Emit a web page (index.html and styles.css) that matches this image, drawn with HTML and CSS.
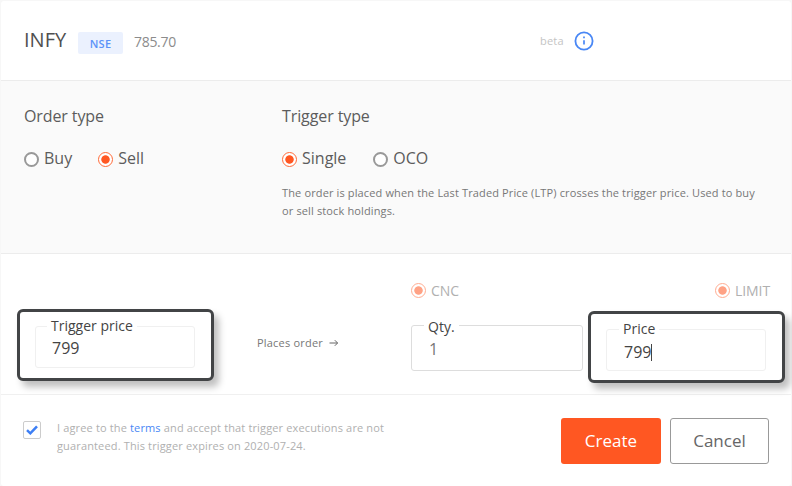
FILE: index.html
```html
<!DOCTYPE html>
<html lang="en">
<head>
  <meta charset="UTF-8" />
  <meta name="viewport" content="width=device-width, initial-scale=1" />
  <title>Create GTT</title>
  <link rel="stylesheet" href="styles.css">
</head>
<body>
<form class="gtt">
  <header class="gtt-header">
    <span class="symbol">INFY</span>
    <span class="exchange">NSE</span>
    <span class="last-price">785.70</span>
    <span class="beta">beta</span>
    <svg class="info" viewBox="0 0 20 20">
      <circle cx="10" cy="10" r="8.6" fill="none" stroke="#4987f5" stroke-width="1.8"/>
      <path d="M10 9.2v4.4M10 5.6v1.6" stroke="#4987f5" stroke-width="1.7"/>
    </svg>
  </header>

  <section class="types">
    <div class="order-type">
      <h2>Order type</h2>
      <div class="radios">
        <label class="radio"><i class="dot"></i><span>Buy</span></label>
        <label class="radio"><i class="dot checked"></i><span>Sell</span></label>
      </div>
    </div>
    <div class="trigger-type">
      <h2>Trigger type</h2>
      <div class="radios">
        <label class="radio"><i class="dot checked"></i><span>Single</span></label>
        <label class="radio"><i class="dot"></i><span>OCO</span></label>
      </div>
      <p class="hint">The order is placed when the Last Traded Price (LTP) crosses the trigger price. Used to buy<br>or sell stock holdings.</p>
    </div>
  </section>

  <section class="order">
    <div class="order-options">
      <label class="radio faded"><i class="dot checked"></i><span>CNC</span></label>
      <label class="radio faded"><i class="dot checked"></i><span>LIMIT</span></label>
    </div>
    <div class="order-fields">
      <div class="highlight trigger">
        <fieldset class="field">
          <legend>Trigger price</legend>
          <div class="value">799</div>
        </fieldset>
      </div>
      <div class="places">
        <span>Places order</span>
        <svg class="arrow" viewBox="0 0 10 8"><path d="M0.5 4h8M5.8 1.2L8.6 4L5.8 6.8" fill="none" stroke="#666" stroke-width="1"/></svg>
      </div>
      <fieldset class="field qty">
        <legend>Qty.</legend>
        <div class="value">1</div>
      </fieldset>
      <div class="highlight price">
        <fieldset class="field">
          <legend>Price</legend>
          <div class="value">799<span class="caret"></span></div>
        </fieldset>
      </div>
    </div>
  </section>

  <footer class="gtt-footer">
    <div class="checkbox">
      <svg viewBox="0 0 12 10"><path d="M1 5.2L4.3 8.3L11 1.3" fill="none" stroke="#3d7ff5" stroke-width="2.5"/></svg>
    </div>
    <p class="agree">I agree to the <a>terms</a> and accept that trigger executions are not<br>guaranteed. This trigger expires on 2020-07-24.</p>
    <button type="button" class="btn create">Create</button>
    <button type="button" class="btn cancel">Cancel</button>
  </footer>
</form>
</body>
</html>
```
FILE: styles.css
```css
* {
  box-sizing: border-box;
}
body {
  margin: 0;
  background: #f7f7f7;
  font-family: "Open Sans", "Noto Sans", sans-serif;
  font-size: 16px;
  color: #5c5c5c;
}
.gtt {
  width: 790px;
  height: 485px;
  margin: 1px 0 0 1px;
  background: #fff;
  border-radius: 3px;
}
.gtt-header {
  display: flex;
  height: 80px;
  padding-left: 23px;
  border-bottom: 1px solid #ececec;
}
.symbol {
  width: 54px;
  margin-top: 25px;
  font-size: 20px;
  line-height: 28px;
  color: #505050;
}
.exchange {
  width: 45px;
  height: 22px;
  margin-top: 31px;
  border-radius: 2px;
  background: #ebf1fe;
  color: #5b93f8;
  font-size: 11px;
  font-weight: 600;
  line-height: 23px;
  letter-spacing: 0.3px;
  text-align: center;
}
.last-price {
  width: 70px;
  margin: 30px 0 0 11px;
  font-size: 14px;
  line-height: 21px;
  letter-spacing: -0.3px;
  color: #8c8c8c;
}
.beta {
  width: 34px;
  margin: 30px 0 0 336px;
  font-size: 11px;
  line-height: 19px;
  letter-spacing: 0.2px;
  color: #c4c4c4;
}
.info {
  width: 20px;
  height: 20px;
  margin-top: 30px;
}
.types {
  display: flex;
  height: 173px;
  padding: 24px 23px 0;
  background: #fafafa;
  border-bottom: 1px solid #ececec;
}
.order-type {
  width: 258px;
}
.trigger-type {
  white-space: nowrap;
}
h2 {
  margin: 0;
  font-size: 16px;
  line-height: 22px;
  font-weight: 400;
  letter-spacing: -0.1px;
}
.radios {
  display: flex;
  gap: 26px;
  margin-top: 20px;
}
.trigger-type .radios {
  gap: 27px;
}
.radio {
  display: flex;
  gap: 5px;
  line-height: 22px;
}
.dot {
  width: 15px;
  height: 15px;
  margin-top: 5px;
  border: 2px solid #999;
  border-radius: 50%;
  background: #fff;
}
.dot.checked {
  border: 1.5px solid #ff6a38;
  background: radial-gradient(circle, #ff5722 3.8px, #fff 4.6px);
}
.hint {
  margin: 15px 0 0;
  font-size: 11px;
  line-height: 18px;
  letter-spacing: 0.135px;
  color: #777;
}
.order-options {
  display: flex;
  justify-content: space-between;
  padding: 26px 21px 0 410px;
}
.faded {
  font-size: 14px;
  letter-spacing: -0.1px;
  color: #b0b0b0;
}
.faded .dot {
  margin-top: 3px;
  opacity: 0.55;
}
.order {
  height: 141px;
  border-bottom: 1px solid #f0f0f0;
}
.order-fields {
  display: flex;
  align-items: flex-start;
  padding: 7px 0 0 16px;
}
.highlight {
  flex: none;
  width: 197px;
  height: 72px;
  padding: 5px 16px 0 15px;
  border: 3px solid #424446;
  border-radius: 6px;
  background: #fff;
  box-shadow: 5px 6px 7px rgba(0,0,0,0.25);
}
.highlight.price {
  margin: 2px 0 0 5px;
}
.field {
  min-width: 0;
  height: 51px;
  margin: 0;
  padding: 0 0 0 12px;
  border: 1px solid #f0f0f0;
  border-radius: 3px;
  font-size: 16px;
  color: #444;
}
.field legend {
  padding: 0 4px;
  font-size: 14px;
  line-height: 19px;
}
.field .value {
  display: flex;
  align-items: center;
  padding-left: 4px;
  margin-top: 2px;
  line-height: 22px;
}
.trigger .field {
  padding-left: 11px;
}
.trigger legend {
  line-height: 18px;
  padding-bottom: 1px;
}
.trigger .value {
  padding-left: 5px;
  margin-top: 1px;
}
.price legend {
  padding-bottom: 2px;
}
.price .field {
  height: 52px;
}
.price .value {
  padding-left: 5px;
  margin-top: 1px;
}
.caret {
  width: 1px;
  height: 17px;
  background: #444;
}
.places {
  display: flex;
  align-items: center;
  gap: 6px;
  width: 154px;
  margin: 25px 0 0 43px;
  font-size: 11px;
  line-height: 18px;
  letter-spacing: 0.2px;
  color: #777;
}
.arrow {
  width: 10px;
  height: 8px;
}
.qty {
  width: 172px;
  height: 55px;
  margin-top: 7px;
  border-color: #ddd;
}
.qty legend {
  padding-top: 2px;
  line-height: 17px;
}
.qty .value {
  margin-top: 3px;
  padding-left: 5px;
  color: #777;
}
.gtt-footer {
  display: flex;
  align-items: flex-start;
  padding: 0 21px 0 22px;
}
.checkbox {
  display: flex;
  align-items: center;
  justify-content: center;
  width: 18px;
  height: 18px;
  margin-top: 26px;
  border: 1px solid #ccc;
  border-radius: 2px;
}
.checkbox svg {
  width: 12px;
  height: 10px;
}
.agree {
  width: 504px;
  margin: 24px 0 0 16px;
  font-size: 11px;
  line-height: 18px;
  letter-spacing: 0.145px;
  color: #b0b0b0;
  white-space: nowrap;
}
.agree a {
  color: #4987f5;
}
.btn {
  height: 46px;
  margin-top: 23px;
  padding: 0;
  border-radius: 3px;
  font-family: inherit;
  font-size: 17px;
  line-height: 22px;
}
.create {
  width: 100px;
  flex: none;
  border: none;
  background: #ff5722;
  color: #fff;
}
.cancel {
  width: 99px;
  flex: none;
  margin-left: 9px;
  border: 1px solid #999;
  background: #fff;
  color: #666;
}
```
